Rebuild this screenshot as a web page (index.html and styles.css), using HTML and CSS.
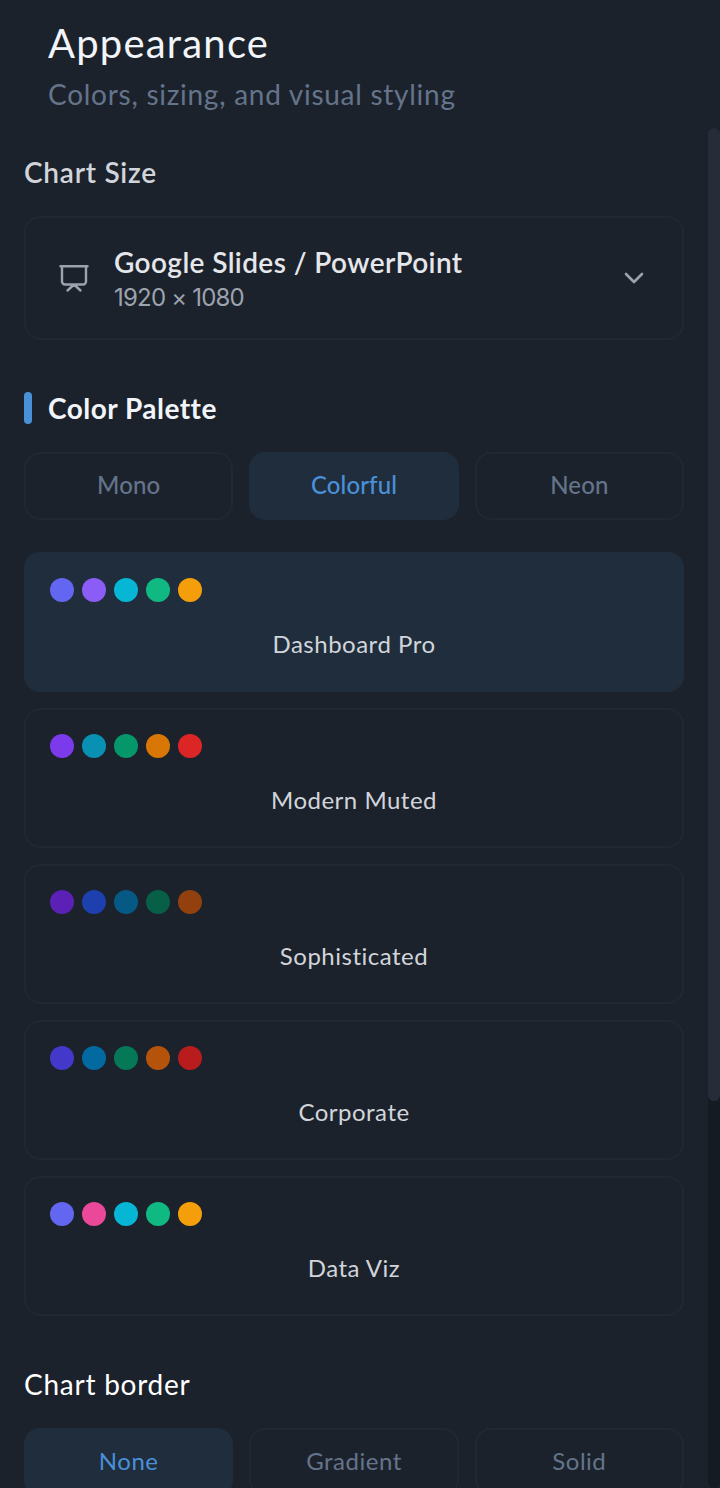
FILE: index.html
```html
<!DOCTYPE html>
<html lang="en">
<head>
<meta charset="utf-8">
<title>Appearance</title>
<link rel="stylesheet" href="styles.css">
</head>
<body>
<div class="panel">
  <header class="panel-header">
    <h1 class="title">Appearance</h1>
    <p class="subtitle">Colors, sizing, and visual styling</p>
  </header>
  <div class="panel-body">
    <main class="content">
      <h2 class="label size-label">Chart Size</h2>
      <button class="size-select">
        <svg class="icon-board" viewBox="0 0 32 32" fill="none" stroke="currentColor" stroke-width="2.4" stroke-linecap="round" stroke-linejoin="round">
          <path d="M2.5 4.3h27M4 4.3v15.2a3 3 0 0 0 3 3h18a3 3 0 0 0 3-3v-15.2M16 22.5l-6.5 6M16 22.5l6.5 6"/>
        </svg>
        <span class="size-text">
          <span class="size-name">Google Slides / PowerPoint</span>
          <span class="size-dims">1920 × 1080</span>
        </span>
        <svg class="icon-chevron" viewBox="0 0 24 24" fill="none" stroke="currentColor" stroke-width="2.6" stroke-linecap="round" stroke-linejoin="round">
          <path d="M4 8l8 8 8-8"/>
        </svg>
      </button>

      <h2 class="section-title">Color Palette</h2>
      <div class="segments">
        <button class="segment">Mono</button>
        <button class="segment active">Colorful</button>
        <button class="segment">Neon</button>
      </div>

      <div class="palettes">
        <button class="palette selected">
          <span class="dots"><i class="dot indigo"></i><i class="dot violet"></i><i class="dot cyan"></i><i class="dot emerald"></i><i class="dot amber"></i></span>
          <span class="palette-name">Dashboard Pro</span>
        </button>
        <button class="palette">
          <span class="dots"><i class="dot violet-600"></i><i class="dot cyan-600"></i><i class="dot emerald-600"></i><i class="dot amber-600"></i><i class="dot red-600"></i></span>
          <span class="palette-name">Modern Muted</span>
        </button>
        <button class="palette">
          <span class="dots"><i class="dot violet-800"></i><i class="dot blue-800"></i><i class="dot sky-800"></i><i class="dot emerald-800"></i><i class="dot amber-800"></i></span>
          <span class="palette-name">Sophisticated</span>
        </button>
        <button class="palette">
          <span class="dots"><i class="dot indigo-700"></i><i class="dot sky-700"></i><i class="dot emerald-700"></i><i class="dot amber-700"></i><i class="dot red-700"></i></span>
          <span class="palette-name">Corporate</span>
        </button>
        <button class="palette">
          <span class="dots"><i class="dot indigo"></i><i class="dot pink"></i><i class="dot cyan"></i><i class="dot emerald"></i><i class="dot amber"></i></span>
          <span class="palette-name">Data Viz</span>
        </button>
      </div>

      <h2 class="label border-label">Chart border</h2>
      <div class="segments">
        <button class="segment regular active">None</button>
        <button class="segment regular">Gradient</button>
        <button class="segment regular">Solid</button>
      </div>
    </main>
    <div class="scrollbar"><div class="thumb"></div></div>
  </div>
</div>
</body>
</html>
```
FILE: styles.css
```css
* { box-sizing: border-box; }

body {
  margin: 0;
  background: #1c222b;
  color: #e8eaf0;
  font-family: Lato, "Open Sans", sans-serif;
  overflow: hidden;
}

h1, h2, p { margin: 0; font-weight: 400; }

button {
  margin: 0;
  background: transparent;
  border: 2px solid #212831;
  border-radius: 16px;
  color: inherit;
  font-family: inherit;
}

.panel {
  display: flex;
  flex-direction: column;
  height: 1488px;
  overflow: hidden;
}

.panel-header {
  flex: none;
  height: 128px;
  padding: 17px 48px 0;
}

.title {
  font-size: 40px;
  line-height: 52px;
  letter-spacing: 1.2px;
  color: #f1f5f9;
}

.subtitle {
  margin-top: 5px;
  font-size: 28px;
  line-height: 40px;
  letter-spacing: 0.73px;
  color: #64748b;
}

.panel-body {
  flex: 1;
  min-height: 0;
  display: grid;
  grid-template-columns: 1fr 12px;
}

.content {
  min-width: 0;
  padding: 24px 24px 0;
  overflow: hidden;
}

.label {
  font-size: 28px;
  line-height: 40px;
  letter-spacing: 0.75px;
}

.size-label { font-weight: 600; color: #d1d5db; }

.size-select {
  display: flex;
  align-items: center;
  width: 100%;
  height: 124px;
  margin-top: 24px;
  padding: 0 36px 0 32px;
  text-align: left;
}

.icon-board { width: 32px; height: 32px; color: #9ca3af; }
.icon-chevron { width: 24px; height: 24px; color: #9ca3af; }

.size-text {
  flex: 1;
  display: flex;
  flex-direction: column;
  margin-left: 24px;
  padding-top: 3px;
}

.size-name {
  font-size: 28px;
  line-height: 36px;
  font-weight: 600;
  letter-spacing: 0.4px;
  color: #e5e7eb;
}

.size-dims {
  font-family: Inter, sans-serif;
  font-size: 24px;
  line-height: 35px;
  letter-spacing: -0.8px;
  color: #9ca3af;
}

.section-title {
  display: flex;
  align-items: center;
  gap: 16px;
  margin-top: 48px;
  font-size: 28px;
  line-height: 40px;
  font-weight: 700;
  letter-spacing: 0.48px;
  color: #f1f5f9;
}

.section-title::before {
  content: "";
  width: 8px;
  height: 32px;
  border-radius: 4px;
  background: #4a90d9;
}

.segments {
  display: grid;
  grid-template-columns: repeat(3, 1fr);
  gap: 16px;
  margin-top: 24px;
}

.segment {
  height: 68px;
  padding: 0 0 3px;
  font-size: 24px;
  font-weight: 500;
  letter-spacing: 0.1px;
  color: #64748b;
}

.segment.regular { font-weight: 400; letter-spacing: 0.5px; }

.segment.active {
  background: #202d3c;
  border-color: #202d3c;
  color: #4a90d9;
}

.palettes {
  display: flex;
  flex-direction: column;
  gap: 16px;
  margin-top: 32px;
}

.palette {
  display: flex;
  flex-direction: column;
  align-items: flex-start;
  height: 140px;
  padding: 24px;
}

.palette.selected { background: #202d3c; border-color: #202d3c; }

.dots { display: flex; gap: 8px; }
.dot { width: 24px; height: 24px; border-radius: 50%; }

.palette-name {
  align-self: center;
  margin-top: 24px;
  font-size: 24px;
  line-height: 36px;
  letter-spacing: 0.5px;
  color: #d1d5db;
}

.border-label { margin-top: 48px; color: #fff; }

.indigo { background: #6366f1; }
.violet { background: #8b5cf6; }
.cyan { background: #06b6d4; }
.emerald { background: #10b981; }
.amber { background: #f59e0b; }
.pink { background: #ec4899; }
.violet-600 { background: #7c3aed; }
.cyan-600 { background: #0891b2; }
.emerald-600 { background: #059669; }
.amber-600 { background: #d97706; }
.red-600 { background: #dc2626; }
.violet-800 { background: #5b21b6; }
.blue-800 { background: #1e40af; }
.sky-800 { background: #075985; }
.emerald-800 { background: #065f46; }
.amber-800 { background: #92400e; }
.indigo-700 { background: #4338ca; }
.sky-700 { background: #0369a1; }
.emerald-700 { background: #047857; }
.amber-700 { background: #b45309; }
.red-700 { background: #b91c1c; }

.scrollbar { background: #141b23; border-radius: 6px; }
.thumb { height: 973px; border-radius: 6px; background: #272d38; }
```
